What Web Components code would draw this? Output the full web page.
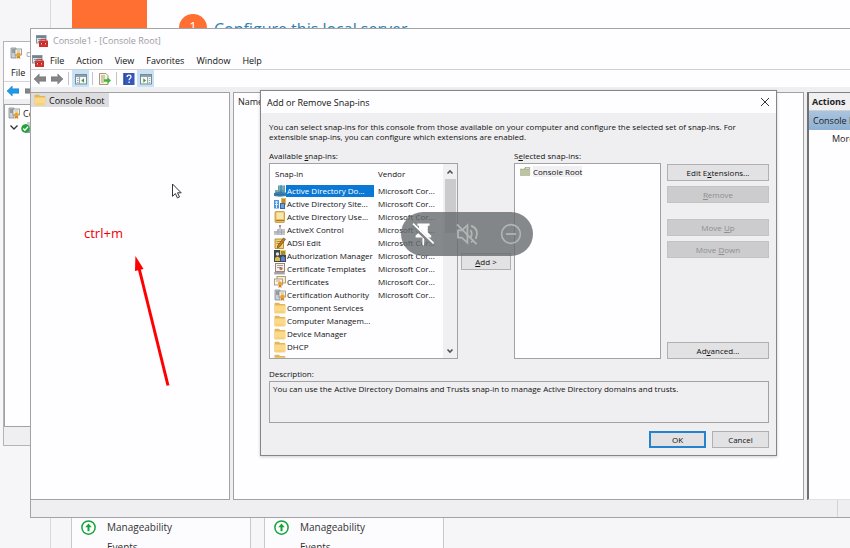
<!DOCTYPE html>
<html lang="en">
<head>
<meta charset="utf-8">
<title>Console1 - [Console Root]</title>
<style>
html,body{margin:0;height:100%;overflow:hidden}
body{font-family:"Open Sans","Noto Sans",sans-serif;font-size:9px;color:#222;background:#f6f6f8}
</style>
</head>
<body>
<remote-desktop></remote-desktop>
<script>
const define = (name, html, setup) => {
  const tpl = document.createElement('template');
  tpl.innerHTML = html;
  customElements.define(name, class extends HTMLElement {
    constructor() {
      super();
      this.attachShadow({mode: 'open'}).appendChild(tpl.content.cloneNode(true));
    }
    connectedCallback() { if (setup) setup(this, this.shadowRoot); }
  });
};

const ICONS = {
  mmc: '<rect x=".5" y=".5" width="9.5" height="7.5" fill="#dfe6ec" stroke="#8a97a3"/><path d="M.5 2h9.5" stroke="#6d8494" stroke-width="2"/><path d="M2 4.5h3M2 6.5h2" stroke="#8a97a3"/><path d="M5.200 5.500V4.300h4.600v1.200" fill="none" stroke="#a5312c"/><rect x="3" y="5.500" width="9" height="6.500" rx=".6" fill="#d2322d"/><path d="M3 8.500h9" stroke="#a32825" stroke-width=".7"/><path d="M5.500 8v1.400M9.500 8v1.400" stroke="#f6c9c5"/>',
  folder: '<path d="M.5 1.800q0-1 1-1h3.500l1 1.200h4.500q.8 0 .8.8V10.500q0 .8-.8.800H1.300q-.8 0-.8-.8z" fill="#e3b658"/><path d="M.5 3.600h10.800v6.900q0 .8-.8.800H1.300q-.8 0-.8-.8z" fill="#fbd98b"/><path d="M1.500 10h8.500" stroke="#f3c76e"/>',
  root: '<path d="M0 3h4.500l1-2H11v9.500H0z" fill="#a9b391"/><path d="M0 4h11v6.500H0z" fill="#bcc4a4"/><path d="M6.500 2.500h3.500" stroke="#e6ead9"/>',
  back: '<path d="M0 6l5.200-5v2.800H12v4.400H5.200V11z" fill="#858585" stroke="#6c6c6c" stroke-width=".5"/>',
  fwd: '<path d="M12 6L6.800 1v2.800H0v4.400h6.800V11z" fill="#858585" stroke="#6c6c6c" stroke-width=".5"/>',
  blueback: '<path d="M0 6l5.200-5v2.800H12v4.400H5.200V11z" fill="#1d9be9" stroke="#1479bd" stroke-width=".5"/>',
  paneleft: '<rect x=".5" y="1.500" width="11" height="9.500" fill="#f4f6f7" stroke="#7b8b95"/><path d="M1 3h10" stroke="#8ea0ab" stroke-width="2"/><path d="M4.500 4v7" stroke="#9aa7af"/><path d="M2 5.500h1.500M2 7.500h1.500M2 9.500h1.500" stroke="#7b8b95" stroke-width=".7"/><path d="M9 5.300v4.400L6.300 7.500z" fill="#3c9b3a"/>',
  paneright: '<rect x=".5" y="1.500" width="11" height="9.500" fill="#f4f6f7" stroke="#7b8b95"/><path d="M1 3h10" stroke="#8ea0ab" stroke-width="2"/><path d="M7.500 4v7" stroke="#9aa7af"/><path d="M8.700 5.500h1.500M8.700 7.500h1.500M8.700 9.500h1.500" stroke="#7b8b95" stroke-width=".7"/><path d="M3.300 5.300v4.400L6 7.500z" fill="#3c9b3a"/>',
  exportlist: '<path d="M.5.500H7l2 2v9H.5z" fill="#fbf6d8" stroke="#a49c78"/><path d="M2 3h4M2 5h4M2 7h3M2 9h3" stroke="#8c8c7c" stroke-width=".8"/><path d="M5 6.300h3.500V4.200L12 7.500l-3.500 3.200V8.700H5z" fill="#43b53d"/>',
  help: '<rect x=".5" y="0" width="11" height="12" fill="#3557b7"/><path d="M1 0v12" stroke="#23408f"/><path d="M4.200 4q0-1.900 1.900-1.900T8 3.800q0 1-1 1.700-.9.600-.9 1.700M6.100 8.600v1.500" fill="none" stroke="#fff" stroke-width="1.300"/>',
  ca: '<path d="M1 1h5v10H1z" fill="#c9cfd3" stroke="#848c92" stroke-width=".8"/><path d="M2 3h3M2 5h3" stroke="#5f6a72"/><rect x="5" y="2" width="6.500" height="6" fill="#f7f3e8" stroke="#8b8c84" stroke-width=".8"/><path d="M6.500 4h3.500" stroke="#999" stroke-width=".7"/><circle cx="8.500" cy="7.500" r="2.200" fill="#e7a431"/><path d="M7.200 9l-.6 3 1.900-1 1.900 1-.6-3z" fill="#d38a22"/>',
  domains: '<path d="M4 .5h7v7H4z" fill="#5b9fb4"/><path d="M5 2h5M5 4h5" stroke="#8fc0c4"/><path d="M1 5h5v4H1z" fill="#7fa9a0"/><path d="M0 8l5-1.500 7 1V11l-6 .8L0 11z" fill="#3b7fae"/><path d="M7 0v8M1 9.500h9" stroke="#2b6f94" stroke-width=".8"/>',
  sites: '<rect x="0" y="2" width="5" height="8.500" fill="#4f94d8"/><path d="M1 4h3M1 6.500h3M2.500 3v7" stroke="#dcecfb"/><rect x="7" y="0" width="5" height="7" fill="#e8b94f"/><path d="M8 2h3M8 4h3" stroke="#8c6a24"/><path d="M6 5h5v6H6z" fill="#2e69b2"/><path d="M7 7h3M7 9h3" stroke="#b9d6f3"/>',
  users: '<rect x="1" y=".5" width="9.500" height="11" rx="1" fill="#e9be59" stroke="#b9882b" stroke-width=".7"/><rect x="2.500" y="1.500" width="7" height="6.500" fill="#f9e6ae"/><path d="M2 9.500h8" stroke="#a87924"/>',
  activex: '<path d="M0 7h3V5h2V1h2v4h4v6H0z" fill="#c2c4ca"/><path d="M0 8h11M4 5v6M7.500 5v6" stroke="#9b9ea8" stroke-width=".7"/><circle cx="6" cy="2" r="1" fill="#b7727c"/>',
  adsi: '<path d="M1 2h8.500v9.500H1z" fill="#f6d36f" stroke="#a97d1f" stroke-width=".8"/><path d="M2.500 4.500h5M2.500 6.500h3" stroke="#9b7a33" stroke-width=".8"/><path d="M3.500 9L9.500 1l2 1.300L5.500 10l-2 .8z" fill="#c47d26" stroke="#4b3a26" stroke-width=".6"/>',
  auth: '<rect x="0" y="0" width="12" height="12" fill="#3c4457"/><rect x="6" y="0" width="6" height="5" fill="#efce4b"/><circle cx="3.500" cy="4" r="1.700" fill="#e9e4cb"/><path d="M1 11V8q2.500-3 5 0v3z" fill="#d9bf42"/><path d="M7 11V7.500q2-2.500 4 0V11z" fill="#5c83cc"/><path d="M8 1v4M10 1v4" stroke="#41465a"/>',
  templates: '<rect x="1.500" y=".5" width="9" height="8" fill="#f8f1ea" stroke="#98867e"/><path d="M3 2.500h6M3 4.500h4" stroke="#8c8c93" stroke-width=".8"/><circle cx="7" cy="5.500" r="1.600" fill="#c76655"/><path d="M0 9h11v2.500H0z" fill="#b8b6b6"/><path d="M1 10h9" stroke="#837b7b" stroke-width=".7"/>',
  certs: '<rect x="3" y=".5" width="8.500" height="6.500" fill="#f7ecd0" stroke="#9c8c66" stroke-width=".8"/><rect x=".5" y="3" width="8" height="6" fill="#fcf6e3" stroke="#9c8c66" stroke-width=".8"/><path d="M2 5h4" stroke="#a89a78" stroke-width=".8"/><circle cx="6" cy="7.500" r="2" fill="#eda236"/><path d="M5 9l-.6 3L6 11l1.600 1L7 9z" fill="#d77c22"/>',
  okserver: '<path d="M4 3h8v9H4z" fill="#97a4ab"/><path d="M6 1h6v8H6z" fill="#c8d0d4"/><circle cx="4.500" cy="7.500" r="4.300" fill="#25a23a"/><path d="M2.300 7.500l1.600 1.700L7 5.800" fill="none" stroke="#fff" stroke-width="1.300"/>',
  up: '<circle cx="6" cy="6" r="5.300" fill="#fff" stroke="#15a33d" stroke-width="1.200"/><path d="M6 2.800L8.600 5.700H6.800V9H5.200V5.700H3.400z" fill="#15a33d"/>',
  close: '<path d="M2 2l8 8M10 2l-8 8" stroke="#333" stroke-width="1"/>',
  chevup: '<path d="M3.500 7.500L6 5l2.500 2.500" fill="none" stroke="#555" stroke-width="1.600"/>',
  chevdown: '<path d="M3.500 4.500L6 7l2.500-2.500" fill="none" stroke="#555" stroke-width="1.600"/>',
  expand: '<path d="M2.500 4.500L6 8l3.500-3.500" fill="none" stroke="#333" stroke-width="1.300"/>',
  unpin: '<path d="M3.200.8h6.100v1.100h-.9v3.300l1.700 1.600v1H6.600v3.400L6.200 12l-.5-.8V7.800H2.300v-1L4 5.200V1.900h-.8z" fill="#fff"/><path d="M.7 1.500l10.300 9.700" stroke="#7e8184" stroke-width="1.900"/><path d="M1 .8l10.300 9.900" stroke="#fff" stroke-width=".9"/>',
  mute: '<path d="M1.500 4.200h1.900L6.200 1.600v8.800L3.400 7.800H1.500z" fill="none" stroke="#b2b4b6" stroke-width=".9"/><path d="M7.700 4q1.300 2 0 4M8 1.800q4.400 1.700 2.300 6.600M9.200 9.200l-1.200 1" fill="none" stroke="#b2b4b6" stroke-width=".9"/><path d="M1 1.200l9.800 9.900" stroke="#b2b4b6" stroke-width=".9"/>',
  minus: '<circle cx="6" cy="6" r="4.700" fill="none" stroke="#b2b4b6" stroke-width=".8"/><path d="M3.500 6h5" stroke="#b2b4b6" stroke-width=".9"/>'
};

customElements.define('ui-icon', class extends HTMLElement {
  constructor() { super(); this.attachShadow({mode: 'open'}); }
  connectedCallback() {
    this.shadowRoot.innerHTML = `<style>:host{display:inline-block;flex:none;width:var(--size,12px);height:var(--size,12px)}svg{display:block;width:100%;height:100%}</style>
      <svg viewBox="0 0 12 12" aria-hidden="true">${ICONS[this.getAttribute('name')]}</svg>`;
  }
});

/* Push button of the dialog */
define('push-button', `<style>
:host{display:block}
button{box-sizing:border-box;display:block;width:100%;height:17px;padding:0;font:inherit;line-height:15px;color:#111;background:#e2e1e3;border:1px solid #b0b0b2}
button:disabled{color:#8f8f91;background:#cccbcd;border-color:#c3c2c4}
:host([default]) button{border:2px solid #2583cd;line-height:13px}
</style><button type="button"><slot></slot></button>`,
(host, root) => { root.querySelector('button').disabled = host.hasAttribute('disabled'); });

define('menu-bar', `<style>
:host{display:flex;align-items:center;gap:12px}
::slotted(button){font:inherit;color:#111;border:0;padding:0;background:none;white-space:nowrap}
</style><slot></slot>`);

define('tool-bar', `<style>
:host{display:flex;align-items:center;height:17px}
button{display:flex;align-items:center;justify-content:center;width:17px;height:17px;padding:0;border:0;background:none}
button.on{background:#c5e2f6}
i{width:1px;height:13px;margin:0 3px;background:#c4c4c6}
</style>
<button aria-label="Back"><ui-icon name="back"></ui-icon></button>
<button aria-label="Forward"><ui-icon name="fwd"></ui-icon></button>
<i></i>
<button class="on" aria-label="Show console tree"><ui-icon name="paneleft"></ui-icon></button>
<i></i>
<button aria-label="Export list"><ui-icon name="exportlist"></ui-icon></button>
<i></i>
<button aria-label="Help"><ui-icon name="help"></ui-icon></button>
<button class="on" aria-label="Show action pane"><ui-icon name="paneright"></ui-icon></button>`);

const ROWS = [
  ['domains', 'Active Directory Do...', 1], ['sites', 'Active Directory Site...', 1],
  ['users', 'Active Directory Use...', 1], ['activex', 'ActiveX Control', 1],
  ['adsi', 'ADSI Edit', 1], ['auth', 'Authorization Manager', 1],
  ['templates', 'Certificate Templates', 1], ['certs', 'Certificates', 1],
  ['ca', 'Certification Authority', 1], ['folder', 'Component Services', 0],
  ['folder', 'Computer Managem...', 0], ['folder', 'Device Manager', 0],
  ['folder', 'DHCP', 0], ['folder', 'Disk Management', 0]
];

define('snapin-list', `<style>
:host{display:flex;box-sizing:border-box;overflow:hidden;background:#fefdff;border:1px solid #a2a2a4}
.view{flex:1;overflow:hidden}
table{width:100%;border-collapse:collapse;table-layout:fixed}
th{height:20px;padding:0 0 0 5px;font-weight:400;text-align:left}
th:last-child,td:last-child{width:69px;padding-left:4px;box-sizing:border-box}
td{height:13px;padding:0;line-height:12px;white-space:nowrap;overflow:hidden}
.cell{display:flex;align-items:center;padding-left:4px}
.cell span{flex:1;padding-left:1px}
tr.sel .cell span{background:#0a78d4;color:#fff}
.bar{width:14px;display:flex;flex-direction:column;align-items:center;background:#f0eff1}
.bar button{display:flex;justify-content:center;align-items:center;width:13px;height:15px;padding:0;border:0;background:none}
.thumb{width:11px;height:54px;background:#cbcacc}
.space{flex:1}
</style>
<div class="view"><table aria-label="Available snap-ins"><thead><tr><th>Snap-in</th><th>Vendor</th></tr></thead><tbody></tbody></table></div>
<div class="bar"><button aria-label="Scroll up"><ui-icon name="chevup"></ui-icon></button><div class="thumb"></div><div class="space"></div><button aria-label="Scroll down"><ui-icon name="chevdown"></ui-icon></button></div>`,
(host, root) => {
  root.querySelector('tbody').innerHTML = ROWS.map(([icon, name, ms], n) =>
    `<tr${n ? '' : ' class="sel"'}><td><div class="cell"><ui-icon name="${icon}"></ui-icon><span>${name}</span></div></td><td>${ms ? 'Microsoft Cor...' : ''}</td></tr>`).join('');
});

define('snapin-dialog', `<style>
:host{display:flex;flex-direction:column;box-sizing:border-box;background:#efeef0;border:1px solid #858587;color:#111;box-shadow:0 1px 3px #0003}
header{display:flex;align-items:center;justify-content:space-between;height:22px;padding:0 5px 0 6px;background:#fefdff}
header button{padding:0;border:0;background:none;display:flex}
h2{margin:0;font-size:9px;font-weight:400}
.body{flex:1;display:flex;flex-direction:column;padding:9px 7px 7px 8px;font-size:8px;line-height:10px}
p{margin:0}
.pick{display:grid;grid-template-columns:189px 50px 147px 1fr;grid-template-rows:10px 1fr;column-gap:3px;row-gap:2px;height:208px;margin-top:9px}
.pick label{grid-row:1}
.pick label.s{grid-column:3}
.pick>*{grid-row:2}
.add{align-self:center}
ul{list-style:none;margin:0;padding:2px 5px;background:#fefdff;border:1px solid #a2a2a4}
li{display:flex;align-items:center;gap:2px;line-height:11px}
li ui-icon{--size:11px}
li span{background:#f0eff1}
.side{display:flex;flex-direction:column;gap:5px;margin-left:3px;padding-top:1px}
.side .gap{margin-top:11px}
.side .end{margin-top:auto}
.desc{margin-top:10px}
textarea{display:block;box-sizing:border-box;width:100%;height:42px;margin-top:2px;padding:2px 3px;font:inherit;color:inherit;background:#efeef0;border:1px solid #a2a2a4;border-radius:0;resize:none;outline:0}
footer{display:flex;justify-content:flex-end;gap:6px;margin-top:auto}
footer push-button{width:57px}
u{text-underline-offset:1px}
</style>
<header><h2>Add or Remove Snap-ins</h2><button aria-label="Close"><ui-icon name="close"></ui-icon></button></header>
<div class="body">
<p>You can select snap-ins for this console from those available on your computer and configure the selected set of snap-ins. For<br>extensible snap-ins, you can configure which extensions are enabled.</p>
<div class="pick">
<label>Available <u>s</u>nap-ins:</label><label class="s">S<u>e</u>lected snap-ins:</label>
<snapin-list></snapin-list>
<push-button class="add"><u>A</u>dd &gt;</push-button>
<ul><li><ui-icon name="root"></ui-icon><span>Console Root</span></li></ul>
<div class="side">
<push-button>Edit E<u>x</u>tensions...</push-button>
<push-button disabled><u>R</u>emove</push-button>
<push-button class="gap" disabled>Move <u>U</u>p</push-button>
<push-button disabled>Move <u>D</u>own</push-button>
<push-button class="end">Ad<u>v</u>anced...</push-button>
</div></div>
<label class="desc" for="d">Description:</label>
<textarea id="d" readonly>You can use the Active Directory Domains and Trusts snap-in to manage Active Directory domains and trusts.</textarea>
<footer><push-button default>OK</push-button><push-button>Cancel</push-button></footer>
</div>`);

define('console-window', `<style>
:host{display:flex;flex-direction:column;box-sizing:border-box;background:#efeef0;border:1px solid #a3a3a5;border-right:0;overflow:hidden;white-space:nowrap}
header{display:flex;align-items:center;gap:5px;height:23px;padding-left:5px;background:#fefdff;color:#9c9c9e}
.menu{display:flex;align-items:center;gap:6px;height:17px;padding-left:1px;background:#fefdff;border-bottom:1px solid #cfcfd1}
tool-bar{background:#fefdff}
.panes{flex:1;display:grid;grid-template-columns:199px 1fr 43px;gap:3px;margin-top:5px}
.panes>*{background:#fefdff;border:1px solid #a2a2a4;min-width:0;overflow:hidden}
.tree{border-left:0}
.node{display:inline-flex;align-items:center;gap:3px;height:14px;padding:0 4px 0 3px;background:#dddcde;color:#111}
.list{padding:3px 4px;line-height:12px}
.actions{border-width:1px 0 1px 2px;border-color:#808082 #aaa #e0dfe1 #707072}
h3{margin:0;padding-left:3px;font-size:9px;line-height:17px;background:#f0eff1;border-bottom:1px solid #d0d0d2}
.cat{padding-left:4px;line-height:19px;background:linear-gradient(#a9c4de,#8fb0d2)}
.more{padding-left:23px;line-height:18px}
footer{display:flex;justify-content:flex-end;height:17px}
footer i{width:12px;border-left:1px solid #d4d4d6}
</style>
<header><ui-icon name="mmc"></ui-icon><span>Console1 - [Console Root]</span></header>
<div class="menu"><ui-icon name="mmc"></ui-icon><menu-bar><button>File</button><button>Action</button><button>View</button><button>Favorites</button><button>Window</button><button>Help</button></menu-bar></div>
<tool-bar></tool-bar>
<div class="panes">
<div class="tree"><div class="node"><ui-icon name="folder"></ui-icon><span>Console Root</span></div></div>
<div class="list">Name</div>
<div class="actions"><h3>Actions</h3><div class="cat">Console Root</div><div class="more">More Actions</div></div>
</div>
<footer><i></i></footer>`);

define('authority-window', `<style>
:host{display:flex;flex-direction:column;box-sizing:border-box;background:#efeef0;border:1px solid #b4b4b6;overflow:hidden;white-space:nowrap}
header,.menu,.tools{display:flex;align-items:center;background:#fefdff}
header{gap:4px;height:22px;padding-left:6px;color:#9c9c9e}
.menu{height:17px;padding-left:7px;border-bottom:1px solid #d4d4d6}
.menu button{font:inherit;color:#111;padding:0;border:0;background:none}
.tools{height:17px;padding-left:3px;gap:6px}
.pane{flex:1;margin-top:5px;padding:1px 3px;background:#fefdff;border:1px solid #a2a2a4}
.pane div{display:flex;align-items:center;gap:3px;height:14px}
.pane div+div{gap:1px}
footer{height:18px}
</style>
<header><ui-icon name="ca"></ui-icon><span>certsrv</span></header>
<div class="menu"><button>File</button></div>
<div class="tools"><ui-icon name="blueback"></ui-icon><ui-icon name="fwd"></ui-icon></div>
<div class="pane"><div><ui-icon name="ca"></ui-icon><span>Certification</span></div><div><ui-icon name="expand"></ui-icon><ui-icon name="okserver"></ui-icon></div></div>
<footer></footer>`);

define('status-tile', `<style>
:host{display:grid;grid-template-columns:15px 1fr;column-gap:11px;align-content:start;align-items:center;box-sizing:border-box;padding:0 9px;background:#fcfbfd;border:1px solid #c9c9cb;font-size:10px;line-height:20px;color:#333}
ui-icon{--size:15px}
.e{grid-column:2}
</style><ui-icon name="up"></ui-icon><span><slot></slot></span><span class="e">Events</span>`);

define('server-manager', `<style>
:host{display:grid;grid-template-columns:51px 1fr;height:100%}
nav{border-right:1px solid #d8d8da}
main{display:flex;flex-direction:column;justify-content:space-between;overflow:hidden}
.welcome{display:flex;height:40px;margin-left:21px;background:#fefdff}
.block{width:75px;background:#ff6f31}
.num{display:flex;justify-content:center;width:28px;height:28px;margin:14px 7px 0 32px;border-radius:50%;background:#ff6f31;color:#fff;font-size:13px;line-height:25px}
.welcome a{margin-top:17px;font-size:16px;line-height:24px;color:#2b7fae;text-decoration:none}
.tiles{display:grid;grid-template-columns:180px 180px;gap:13px;height:32px;margin-left:20px;overflow:hidden}
status-tile{height:48px}
</style>
<nav></nav>
<main><div class="welcome"><div class="block"></div><div class="num">1</div><a href="#">Configure this local server</a></div>
<div class="tiles"><status-tile>Manageability</status-tile><status-tile>Manageability</status-tile></div></main>`);

define('call-controls', `<style>
:host{display:flex;align-items:center;justify-content:space-around;border-radius:22px;background:#686b6ecc}
button{display:flex;padding:0;border:0;background:none}
ui-icon{--size:24px}
</style>
<button aria-label="Unpin"><ui-icon name="unpin"></ui-icon></button>
<button aria-label="Mute"><ui-icon name="mute"></ui-icon></button>
<button aria-label="Minimize"><ui-icon name="minus"></ui-icon></button>`);

define('remote-desktop', `<style>
:host{display:block;position:relative;height:100%;overflow:hidden}
authority-window{position:absolute;left:3px;top:41px;width:300px;height:405px}
console-window{position:absolute;left:30px;right:0;top:28px;bottom:30px}
snapin-dialog{position:absolute;left:260px;top:90px;width:517px;height:366px}
call-controls{position:absolute;left:401px;top:212px;width:132px;height:44px}
.note{position:absolute;left:84px;top:224px;font-size:13px;line-height:18px;color:#f00000}
.arrow{position:absolute;left:130px;top:252px}
.cursor{position:absolute;left:171px;top:183px}
</style>
<server-manager></server-manager>
<authority-window></authority-window>
<console-window></console-window>
<snapin-dialog></snapin-dialog>
<call-controls></call-controls>
<span class="note">ctrl+m</span>
<svg class="arrow" width="44" height="138" viewBox="0 0 44 138"><path d="M9 16L38 133.500" stroke="red" stroke-width="3"/><path d="M5.400 4L13.600 17 5 19z" fill="red"/></svg>
<svg class="cursor" width="12" height="17" viewBox="0 0 12 17"><path d="M1.500 1v12.300l2.900-2.700 2 4.300 2.100-1-2-4.100h3.700z" fill="#fff" stroke="#333" stroke-width="1"/></svg>`);
</script>
</body>
</html>
